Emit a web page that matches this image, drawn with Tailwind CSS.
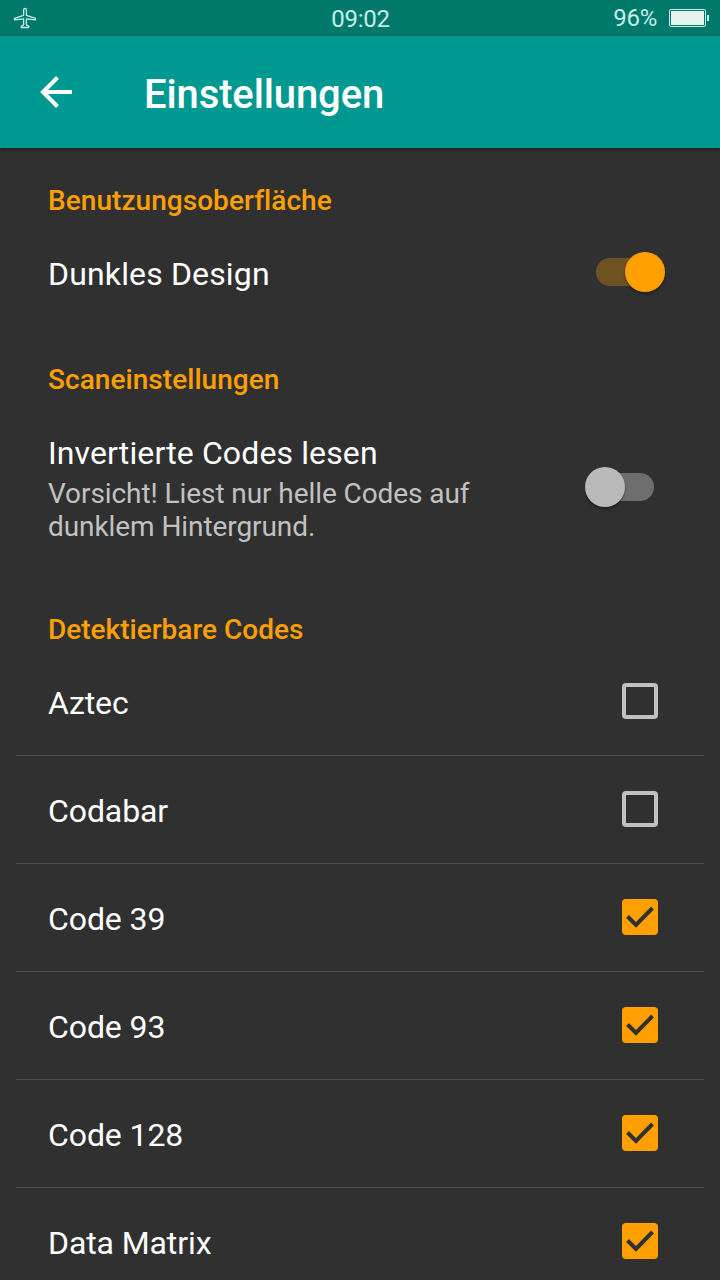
<!DOCTYPE html>
<html lang="de">
<head>
  <meta charset="UTF-8" />
  <meta name="viewport" content="width=device-width, initial-scale=1.0"/>
  <title>Einstellungen</title>
  <script src="https://cdn.jsdelivr.net/npm/@tailwindcss/browser@4"></script>
</head>
<body class="h-screen overflow-hidden bg-[#303030] font-['Roboto',sans-serif] text-white">

  <!-- Status bar -->
  <div class="grid h-9 grid-cols-3 items-center bg-[#00796b] pl-3 pr-[11px] text-2xl text-[#c5eee8]">
    <svg class="h-6 w-6" viewBox="0 0 24 24" fill="none" stroke="currentColor" stroke-width="1.3" stroke-linejoin="round">
      <path d="M13 2.5c-.9 0-1.4.7-1.4 1.5v5.3L2.5 12.4v1.5l9.1-1v6.2l-2.3 1v1.4h7.4v-1.4l-2.3-1v-6.2l9.1 1v-1.5l-9.1-3.1V4c0-.8-.5-1.5-1.4-1.5z"/>
    </svg>
    <span class="pt-0.5 text-center leading-7 tracking-[-0.3px]">09:02</span>
    <div class="flex items-center justify-end">
      <span class="leading-7 tracking-[-0.3px]">96%</span>
      <svg class="ml-3 h-[18px] w-10" viewBox="0 0 40 18">
        <rect x=".5" y=".5" width="36" height="17" rx="1.5" fill="none" stroke="#c5eee8"/>
        <rect x="2" y="2" width="33" height="14" fill="#e8f3f1"/>
        <rect x="38" y="6" width="2" height="6" fill="#c5eee8"/>
      </svg>
    </div>
  </div>

  <!-- App bar -->
  <header class="flex h-28 items-center bg-[#009992] pl-10 shadow-[0_1px_3px_rgba(0,0,0,0.5)]">
    <svg class="h-8 w-8" viewBox="0 0 32 32" fill="none" stroke="#fff" stroke-width="4">
      <path d="M32 16H3M17.5 1.5L3 16l14.5 14.5"/>
    </svg>
    <h1 class="ml-[72px] pt-1.5 text-[40px] font-medium leading-none tracking-[-0.12px]">Einstellungen</h1>
  </header>

  <main class="pt-9">
    <section>
      <h2 class="px-12 text-[28px] font-medium leading-[33px] tracking-[0.05px] text-[#ffa000]">Benutzungsoberfläche</h2>
      <div class="mt-[3px] flex h-[108px] items-center justify-between pl-12 pr-[55px]">
        <span class="text-[32px] tracking-[0.15px]">Dunkles Design</span>
        <svg class="mb-1 h-12 w-[69px] overflow-visible" viewBox="0 0 69 48">
          <rect x="0" y="10" width="62" height="28" rx="14" fill="#6e5222"/>
          <circle cx="49" cy="24" r="20" fill="#ffa000" class="drop-shadow-[0_2px_1px_rgba(0,0,0,0.35)]"/>
        </svg>
      </div>
    </section>

    <section class="pt-[35px]">
      <h2 class="px-12 text-[28px] font-medium leading-[33px] tracking-[0.05px] text-[#ffa000]">Scaneinstellungen</h2>
      <div class="mt-[38px] flex h-[109px] items-center justify-between pl-12 pr-[66px]">
        <div class="w-[460px]">
          <p class="mb-[5px] text-[32px] leading-[38px] tracking-[0.12px]">Invertierte Codes lesen</p>
          <p class="text-[28px] leading-[33px] tracking-[-0.08px] text-[#c1c1c1]">Vorsicht! Liest nur helle Codes auf dunklem Hintergrund.</p>
        </div>
        <svg class="mb-[3px] h-12 w-[69px] overflow-visible" viewBox="0 0 69 48">
          <rect x="7" y="10" width="62" height="28" rx="14" fill="#6e6e6e"/>
          <circle cx="20" cy="24" r="20" fill="#b9b9b9" class="drop-shadow-[0_2px_1px_rgba(0,0,0,0.35)]"/>
        </svg>
      </div>
    </section>

    <section class="pt-[70px]">
      <h2 class="px-12 text-[28px] font-medium leading-[33px] text-[#ffa000]">Detektierbare Codes</h2>
      <ul id="codes" class="mt-0.5 px-4"></ul>
    </section>
  </main>

  <script>
    const codes = [
      ['Aztec', false],
      ['Codabar', false],
      ['Code 39', true],
      ['Code 93', true],
      ['Code 128', true],
      ['Data Matrix', true],
    ];

    const unchecked = '<rect x="2" y="2" width="32" height="32" rx="2" fill="none" stroke="#c1c1c1" stroke-width="4"/>';
    const checked = '<rect width="36" height="36" rx="4" fill="#ffa000"/><path d="M5.5 17.5l8.5 8.5L30.5 9" fill="none" stroke="#303030" stroke-width="4"/>';

    document.getElementById('codes').innerHTML = codes.map(([name, on]) => `
      <li class="flex h-[108px] items-center justify-between border-b border-[#4c4c4c] pl-8 pr-[46px]">
        <span class="pt-[3px] text-[32px] tracking-[-0.1px]">${name}</span>
        <svg class="mb-[1px] h-9 w-9" viewBox="0 0 36 36">${on ? checked : unchecked}</svg>
      </li>`).join('');
  </script>
</body>
</html>
